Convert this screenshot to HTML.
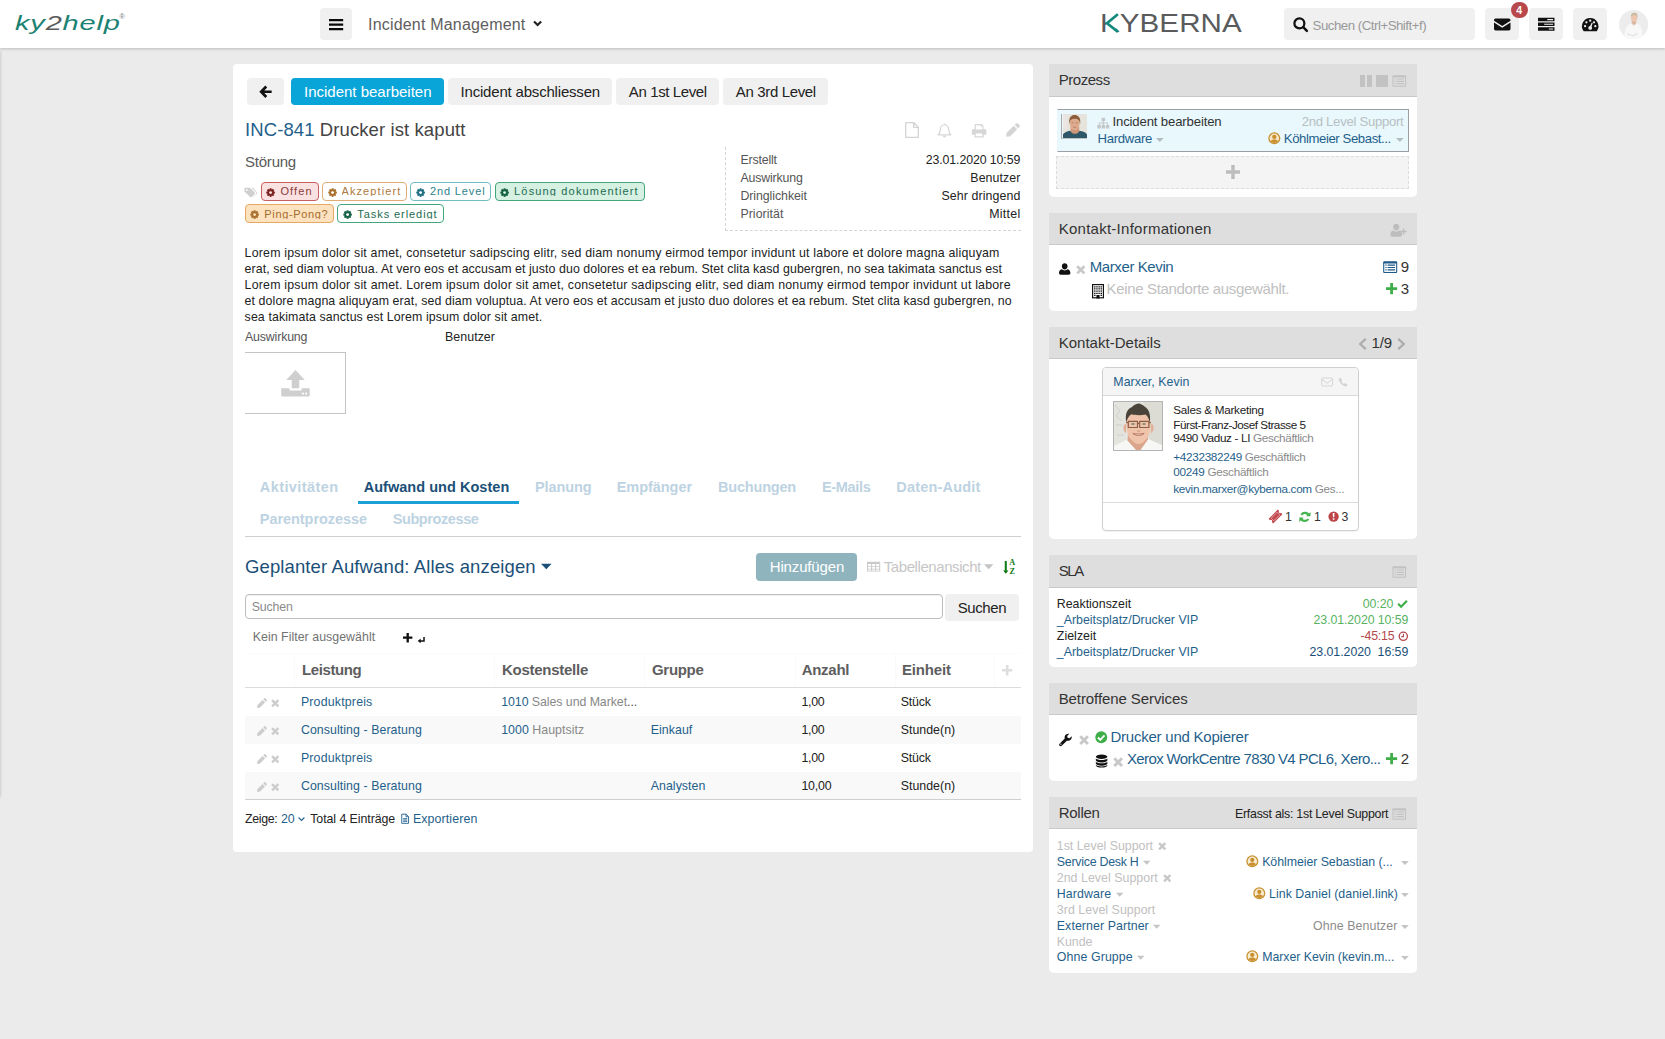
<!DOCTYPE html>
<html lang="de"><head><meta charset="utf-8"><title>ky2help – Incident Management</title>
<style>
html,body{margin:0;padding:0}
body{width:1665px;height:1039px;overflow:hidden;background:#ebebeb;position:relative;font-family:"Liberation Sans",sans-serif;font-size:12px;color:#333}
.b{position:absolute;box-sizing:border-box}
.t{position:absolute;white-space:nowrap;line-height:1}
svg.b{overflow:visible}

</style></head>
<body>
<div class="b " style="left:-12px;top:51px;width:12px;height:746px;background:#e2e2e2;box-shadow:0 0 3px rgba(0,0,0,.22);"></div>
<div class="b " style="left:0px;top:0px;width:1665px;height:48px;background:#fff;box-shadow:0 1px 3px rgba(0,0,0,.2);"></div>
<div class="t" style="left:15px;top:12.300px;font-size:21px;font-style:italic;color:#1c8273;letter-spacing:.6px;transform-origin:0 0;transform:scaleX(1.380);">ky<span style="color:#5a5a5a">2</span>help</div>
<div class="t" style="left:119.500px;top:13px;font-size:7px;color:#777;">®</div>
<div class="b " style="left:320px;top:8px;width:32px;height:32px;background:#f0f0f0;border-radius:4px;"></div>
<svg class="b" style="left:328.8px;top:18.6px;" width="14.2" height="11.2" viewBox="0 0 14.2 11.2"><path fill="#0a0a0a" d="M0 0h14.200v2.300H0zM0 4.450h14.200v2.300H0zM0 8.900h14.200v2.300H0z"/></svg>
<span class="t" style="left:368px;top:17px;font-size:16.0px;color:#5e5e5e;letter-spacing:0.191px;">Incident Management</span>
<svg class="b" style="left:533px;top:18.8px;" width="9.2" height="9.2" viewBox="0 0 16 16"><path fill="none" stroke="#222" stroke-width="3.800" d="M1.800 4.200L8 10.400l6.200-6.200"/></svg>
<span class="t" style="left:1099.9px;top:10.8px;font-size:25.3px;color:#5a5b5d;letter-spacing:0.042px;transform-origin:0 0;transform:scaleX(1.170);">KYBERNA</span>
<div class="b " style="left:1105.6px;top:12px;width:10.6px;height:22px;background:#fff;"></div>
<svg class="b" style="left:1100px;top:10px;" width="24" height="26" viewBox="0 0 24 26"><path fill="none" stroke="#14897b" stroke-width="2.700" stroke-linejoin="miter" d="M17.800 4.200L7 13.300l11 8.600"/></svg>
<div class="b " style="left:1284px;top:8px;width:191px;height:32px;background:#f0f0f0;border-radius:4px;"></div>
<svg class="b" style="left:1293px;top:16.5px;" width="15" height="15" viewBox="0 0 16 16"><circle cx="6.800" cy="6.800" r="5.300" fill="none" stroke="#111" stroke-width="2.400"/><path stroke="#111" stroke-width="2.700" stroke-linecap="round" d="M10.900 10.900l3.900 3.900"/></svg>
<span class="t" style="left:1312.6px;top:18.5px;font-size:13.26px;color:#999;letter-spacing:-0.487px;">Suchen (Ctrl+Shift+f)</span>
<div class="b " style="left:1485px;top:8px;width:34px;height:32px;background:#f0f0f0;border-radius:4px;"></div>
<div class="b " style="left:1529px;top:8px;width:34px;height:32px;background:#f0f0f0;border-radius:4px;"></div>
<div class="b " style="left:1573px;top:8px;width:34px;height:32px;background:#f0f0f0;border-radius:4px;"></div>
<svg class="b" style="left:1494px;top:16px;" width="16.5" height="16.5" viewBox="0 0 16 16"><path fill="#111" d="M0 4.1C0 3.2.7 2.5 1.6 2.5h12.8c.9 0 1.6.7 1.6 1.6v.4L8 9.6 0 4.5zM0 6.3l8 5.1 8-5.1v6.1c0 .9-.7 1.6-1.6 1.6H1.600c-.9 0-1.600-.7-1.600-1.600z"/></svg>
<svg class="b" style="left:1538px;top:15.5px;" width="16.5" height="16.5" viewBox="0 0 16 16"><path fill="#111" d="M0 1.700h16v3.400H0zM0 6.300h16v3.400H0zM0 10.900h16v3.400H0z"/><path fill="#f0f0f0" d="M9 2.800h5.600v1.200H9zM6 7.400h8.600v1.200H6zM10.500 12h4.100v1.200h-4.100z"/></svg>
<svg class="b" style="left:1582px;top:16.4px;" width="16.4" height="16.4" viewBox="0 0 16 16"><path fill="#111" d="M8 2a8 8 0 0 0-6.700 12.400c.2.400.6.600 1 .600h11.400c.400 0 .800-.200 1-.600A8 8 0 0 0 8 2z"/><g fill="#f0f0f0"><circle cx="8" cy="4.600" r="1.100"/><circle cx="4.300" cy="6.200" r="1.100"/><circle cx="11.700" cy="6.200" r="1.100"/><circle cx="3" cy="10" r="1.100"/><circle cx="13" cy="10" r="1.100"/><circle cx="8" cy="11.600" r="1.800"/><path d="M7.300 11l2.300-4.600.9.400-1.700 4.800z"/></g></svg>
<div class="b " style="left:1511px;top:1.5px;width:16.5px;height:16.5px;background:#b9484d;border-radius:50%;"></div>
<span class="t" style="left:1516.2px;top:4.6px;font-size:10.5px;color:#fff;font-weight:700;letter-spacing:0.205px;">4</span>
<svg class="b" style="left:1618.800px;top:9.600px" width="29.200" height="29.200" viewBox="0 0 30 30"><defs><clipPath id="avc"><circle cx="15" cy="15" r="15"/></clipPath></defs><g clip-path="url(#avc)"><rect width="30" height="30" fill="#ececec"/><path d="M5.500 30c-.5-8 2-14 6.500-16.500h7c4 2 5.500 8 5 16.500z" fill="#f8f8f8"/><path d="M12.800 13l2.700 2.800 2.300-2.800-.6-2h-3.800z" fill="#dcb29c"/><ellipse cx="15.600" cy="8.300" rx="3.200" ry="4" fill="#ecc6b0"/><path d="M12.300 8.200c-.6-4 1.400-5.300 3.500-5.300s3.900 1.300 3.100 5.300c-.4-2.200-1.200-3-3.200-3s-3 .8-3.400 3z" fill="#c9b9a3"/><path d="M8.500 24.500l6 2 4.500-2.500" stroke="#e3e3e3" stroke-width="1.300" fill="none"/><path d="M13 13.800l2.500 2.300 2.200-2.300" stroke="#d8d2cc" stroke-width=".8" fill="none"/></g></svg>
<div class="b " style="left:233px;top:64px;width:800px;height:788px;background:#fff;border-radius:4px;"></div>
<div class="b " style="left:246.5px;top:78px;width:37.5px;height:27px;background:#f0f0f0;border-radius:4px;"></div>
<svg class="b" style="left:258.5px;top:85px;" width="13.5" height="13.5" viewBox="0 0 16 16"><path fill="none" stroke="#111" stroke-width="3.200" stroke-linecap="butt" stroke-linejoin="miter" d="M8.600 1.800L2.600 8l6 6.200M3 8H15"/></svg>
<div class="b " style="left:291px;top:78px;width:153px;height:27px;background:#09a5d9;border-radius:4px;"></div>
<span class="t" style="left:304px;top:83.6px;font-size:15.0px;color:#fff;letter-spacing:-0.006px;">Incident bearbeiten</span>
<div class="b " style="left:448px;top:78px;width:164px;height:27px;background:#f0f0f0;border-radius:4px;"></div>
<span class="t" style="left:460.5px;top:83.6px;font-size:15.0px;color:#222;letter-spacing:-0.188px;">Incident abschliessen</span>
<div class="b " style="left:616px;top:78px;width:103px;height:27px;background:#f0f0f0;border-radius:4px;"></div>
<span class="t" style="left:628.8px;top:83.6px;font-size:15.0px;color:#222;letter-spacing:-0.38px;">An 1st Level</span>
<div class="b " style="left:723px;top:78px;width:105px;height:27px;background:#f0f0f0;border-radius:4px;"></div>
<span class="t" style="left:735.8px;top:83.6px;font-size:15.0px;color:#222;letter-spacing:-0.353px;">An 3rd Level</span>
<span class="t" style="left:245px;top:121.2px;font-size:18.5px;color:#444;letter-spacing:0.097px;"><span style="color:#1f5f8b">INC-841</span> Drucker ist kaputt</span>
<svg class="b" style="left:904.6px;top:122px;" width="14" height="16" viewBox="0 0 14 16"><path fill="none" stroke="#d4d4d4" stroke-width="1.300" stroke-linejoin="round" d="M.7.700h8.200l4.400 4.400v10.200H.7zM8.700.700v4.600h4.600"/></svg>
<svg class="b" style="left:937px;top:122.5px;" width="15" height="15.5" viewBox="0 0 16 16"><path fill="none" stroke="#d6d6d6" stroke-width="1.300" stroke-linejoin="round" d="M8 1.600c-2.800 0-4.400 2.200-4.400 5 0 3.400-1.400 4.800-2.400 5.800h13.600c-1-1-2.400-2.400-2.400-5.800 0-2.800-1.600-5-4.400-5z"/><path fill="#d6d6d6" d="M6.300 13.300h3.400c0 1-.7 1.800-1.700 1.800s-1.700-.8-1.700-1.800zM7.300.3h1.400v1.500H7.300z"/></svg>
<svg class="b" style="left:971px;top:122.5px;" width="16" height="15.5" viewBox="0 0 16 16"><path fill="#d6d6d6" d="M3.600 1h7.200l1.800 1.800v3.400h1.200c1 0 1.800.8 1.800 1.800v4.200h-2.800v2.800H3.400v-2.800H.6V8c0-1 .8-1.800 1.800-1.800h1.200zM4.800 2.200v4.400h6.600V3.600H9.800V2.200zM4.600 10.800v3h6.800v-3z"/></svg>
<svg class="b" style="left:1006px;top:123.3px;" width="14" height="14" viewBox="0 0 16 16"><path fill="#d4d4d4" d="M11.400.6c.6-.6 1.600-.6 2.200 0l1.800 1.800c.6.600.6 1.600 0 2.200l-1.500 1.500-4-4zM8.800 3.200l4 4-8.300 8.300L.2 15.800l.3-4.300z"/></svg>
<span class="t" style="left:245px;top:154.2px;font-size:15.0px;color:#5a5a5a;letter-spacing:-0.221px;">Störung</span>
<svg class="b" style="left:244.3px;top:186.2px;" width="13.2" height="13.2" viewBox="0 0 16 16"><path fill="#cfcfcf" d="M.5 3.300c0-.7.600-1.300 1.300-1.300h4.600c.5 0 1 .2 1.400.6l5.200 5.200c.5.500.5 1.300 0 1.800l-3.800 3.800c-.5.500-1.300.5-1.800 0L2.100 8.200C1.700 7.800.5 7.300.5 6.800z"/><circle cx="3.400" cy="4.800" r="1.100" fill="#fff"/><path fill="#cfcfcf" d="M9 2h1.100c.5 0 1 .2 1.400.6l4.200 5.200c.4.500.4 1.300 0 1.800l-3.800 3.800c-.3.300-.7.400-1.100.3l3.700-3.700c.7-.7.700-1.800 0-2.500z"/></svg>
<div class="b " style="left:260.5px;top:181.5px;width:58.3px;height:19px;background:#fbe2e2;border:1px solid #c9605f;border-radius:4px;"></div>
<svg class="b" style="left:266.0px;top:187.5px;" width="9.2" height="9.2" viewBox="0 0 16 16"><g fill="#7d2020"><circle cx="8" cy="8" r="5.700"/><path d="M6.300.5h3.400v15H6.300z"/><path d="M6.300.5h3.400v15H6.300z" transform="rotate(45 8 8)"/><path d="M6.300.5h3.400v15H6.300z" transform="rotate(90 8 8)"/><path d="M6.300.5h3.400v15H6.300z" transform="rotate(135 8 8)"/></g><circle cx="8" cy="8" r="2.500" fill="#fbe2e2"/></svg>
<span class="t" style="left:280.4px;top:185.8px;font-size:11.0px;color:#8c3b3b;letter-spacing:1.116px;overflow:hidden;height:10.600px;">Offen</span>
<div class="b " style="left:322px;top:181.5px;width:85px;height:19px;background:#fff;border:1px solid #dfae74;border-radius:4px;"></div>
<svg class="b" style="left:327.5px;top:187.5px;" width="9.2" height="9.2" viewBox="0 0 16 16"><g fill="#a8702c"><circle cx="8" cy="8" r="5.700"/><path d="M6.300.5h3.400v15H6.300z"/><path d="M6.300.5h3.400v15H6.300z" transform="rotate(45 8 8)"/><path d="M6.300.5h3.400v15H6.300z" transform="rotate(90 8 8)"/><path d="M6.300.5h3.400v15H6.300z" transform="rotate(135 8 8)"/></g><circle cx="8" cy="8" r="2.500" fill="#fff"/></svg>
<span class="t" style="left:341.5px;top:185.8px;font-size:11.0px;color:#ad7a3f;letter-spacing:1.088px;overflow:hidden;height:10.600px;">Akzeptiert</span>
<div class="b " style="left:410.3px;top:181.5px;width:81px;height:19px;background:#fff;border:1px solid #6fbcc4;border-radius:4px;"></div>
<svg class="b" style="left:415.8px;top:187.5px;" width="9.2" height="9.2" viewBox="0 0 16 16"><g fill="#1f6f80"><circle cx="8" cy="8" r="5.700"/><path d="M6.300.5h3.400v15H6.300z"/><path d="M6.300.5h3.400v15H6.300z" transform="rotate(45 8 8)"/><path d="M6.300.5h3.400v15H6.300z" transform="rotate(90 8 8)"/><path d="M6.300.5h3.400v15H6.300z" transform="rotate(135 8 8)"/></g><circle cx="8" cy="8" r="2.500" fill="#fff"/></svg>
<span class="t" style="left:429.9px;top:185.8px;font-size:11.0px;color:#2f7f8c;letter-spacing:0.887px;overflow:hidden;height:10.600px;">2nd Level</span>
<div class="b " style="left:494.5px;top:181.5px;width:150px;height:19px;background:#d6f0e2;border:1px solid #43a57c;border-radius:4px;"></div>
<svg class="b" style="left:500.0px;top:187.5px;" width="9.2" height="9.2" viewBox="0 0 16 16"><g fill="#156045"><circle cx="8" cy="8" r="5.700"/><path d="M6.300.5h3.400v15H6.300z"/><path d="M6.300.5h3.400v15H6.300z" transform="rotate(45 8 8)"/><path d="M6.300.5h3.400v15H6.300z" transform="rotate(90 8 8)"/><path d="M6.300.5h3.400v15H6.300z" transform="rotate(135 8 8)"/></g><circle cx="8" cy="8" r="2.500" fill="#d6f0e2"/></svg>
<span class="t" style="left:514.1px;top:185.8px;font-size:11.0px;color:#1d6b50;letter-spacing:1.156px;overflow:hidden;height:10.600px;">Lösung dokumentiert</span>
<div class="b " style="left:244.6px;top:204.3px;width:89.2px;height:19px;background:#fde2c0;border:1px solid #e6a964;border-radius:4px;"></div>
<svg class="b" style="left:250.1px;top:210.3px;" width="9.2" height="9.2" viewBox="0 0 16 16"><g fill="#a8702c"><circle cx="8" cy="8" r="5.700"/><path d="M6.300.5h3.400v15H6.300z"/><path d="M6.300.5h3.400v15H6.300z" transform="rotate(45 8 8)"/><path d="M6.300.5h3.400v15H6.300z" transform="rotate(90 8 8)"/><path d="M6.300.5h3.400v15H6.300z" transform="rotate(135 8 8)"/></g><circle cx="8" cy="8" r="2.500" fill="#fde2c0"/></svg>
<span class="t" style="left:264.3px;top:208.6px;font-size:11.0px;color:#a36c2c;letter-spacing:0.66px;overflow:hidden;height:10.600px;">Ping-Pong?</span>
<div class="b " style="left:337px;top:204.3px;width:106.5px;height:19px;background:#fff;border:1px solid #43a57c;border-radius:4px;"></div>
<svg class="b" style="left:342.5px;top:210.3px;" width="9.2" height="9.2" viewBox="0 0 16 16"><g fill="#156045"><circle cx="8" cy="8" r="5.700"/><path d="M6.300.5h3.400v15H6.300z"/><path d="M6.300.5h3.400v15H6.300z" transform="rotate(45 8 8)"/><path d="M6.300.5h3.400v15H6.300z" transform="rotate(90 8 8)"/><path d="M6.300.5h3.400v15H6.300z" transform="rotate(135 8 8)"/></g><circle cx="8" cy="8" r="2.500" fill="#fff"/></svg>
<span class="t" style="left:357.3px;top:208.6px;font-size:11.0px;color:#1d6b50;letter-spacing:0.931px;overflow:hidden;height:10.600px;">Tasks erledigt</span>
<div class="b " style="left:725px;top:147px;width:296px;height:83.5px;border-left:1px dashed #d4d4d4;border-bottom:1px dashed #d4d4d4;"></div>
<span class="t" style="left:740.4px;top:154px;font-size:12.36px;color:#555;letter-spacing:-0.16px;">Erstellt</span>
<span class="t" style="left:925.69px;top:154px;font-size:12.36px;color:#222;letter-spacing:-0.108px;">23.01.2020 10:59</span>
<span class="t" style="left:740.4px;top:172px;font-size:12.36px;color:#555;letter-spacing:-0.159px;">Auswirkung</span>
<span class="t" style="left:970.37px;top:172px;font-size:12.36px;color:#222;letter-spacing:0.066px;">Benutzer</span>
<span class="t" style="left:740.4px;top:190px;font-size:12.36px;color:#555;letter-spacing:-0.064px;">Dringlichkeit</span>
<span class="t" style="left:941.41px;top:190px;font-size:12.36px;color:#222;letter-spacing:0.103px;">Sehr dringend</span>
<span class="t" style="left:740.4px;top:208px;font-size:12.36px;color:#555;letter-spacing:0.045px;">Priorität</span>
<span class="t" style="left:989.13px;top:208px;font-size:12.36px;color:#222;letter-spacing:0.328px;">Mittel</span>
<span class="t" style="left:244.6px;top:246.6px;font-size:12.36px;color:#222;letter-spacing:0.201px;">Lorem ipsum dolor sit amet, consetetur sadipscing elitr, sed diam nonumy eirmod tempor invidunt ut labore et dolore magna aliquyam</span>
<span class="t" style="left:244.6px;top:262.6px;font-size:12.36px;color:#222;letter-spacing:0.068px;">erat, sed diam voluptua. At vero eos et accusam et justo duo dolores et ea rebum. Stet clita kasd gubergren, no sea takimata sanctus est</span>
<span class="t" style="left:244.6px;top:278.6px;font-size:12.36px;color:#222;letter-spacing:0.203px;">Lorem ipsum dolor sit amet. Lorem ipsum dolor sit amet, consetetur sadipscing elitr, sed diam nonumy eirmod tempor invidunt ut labore</span>
<span class="t" style="left:244.6px;top:294.6px;font-size:12.36px;color:#222;letter-spacing:0.094px;">et dolore magna aliquyam erat, sed diam voluptua. At vero eos et accusam et justo duo dolores et ea rebum. Stet clita kasd gubergren, no</span>
<span class="t" style="left:244.6px;top:310.6px;font-size:12.36px;color:#222;letter-spacing:0.111px;">sea takimata sanctus est Lorem ipsum dolor sit amet.</span>
<span class="t" style="left:245px;top:331.3px;font-size:12.36px;color:#555;letter-spacing:-0.159px;">Auswirkung</span>
<span class="t" style="left:445px;top:331.3px;font-size:12.36px;color:#222;letter-spacing:0.066px;">Benutzer</span>
<div class="b " style="left:245px;top:352px;width:101px;height:62px;border:1px solid #c4c4c4;border-left:0;"></div>
<svg class="b" style="left:281px;top:368.5px;" width="29" height="28.5" viewBox="0 0 16 16"><path fill="#cfcfcf" d="M8 .5l5.200 5.700h-3.100v4.600H5.900V6.200H2.800zM0 10.800h4.600v1.300h6.800v-1.300H16v4c0 .4-.3.700-.7.700H.7c-.4 0-.7-.3-.7-.7z"/><circle cx="12.200" cy="13.800" r=".6" fill="#fff"/><circle cx="14" cy="13.800" r=".6" fill="#fff"/></svg>
<span class="t" style="left:259.8px;top:480.3px;font-size:14.5px;color:#bdd3e2;font-weight:700;letter-spacing:0.414px;">Aktivitäten</span>
<span class="t" style="left:363.7px;top:480.3px;font-size:14.5px;color:#1b4f78;font-weight:700;letter-spacing:0.033px;">Aufwand und Kosten</span>
<span class="t" style="left:535px;top:480.3px;font-size:14.5px;color:#bdd3e2;font-weight:700;letter-spacing:-0.1px;">Planung</span>
<span class="t" style="left:616.7px;top:480.3px;font-size:14.5px;color:#bdd3e2;font-weight:700;letter-spacing:-0.039px;">Empfänger</span>
<span class="t" style="left:718px;top:480.3px;font-size:14.5px;color:#bdd3e2;font-weight:700;letter-spacing:-0.194px;">Buchungen</span>
<span class="t" style="left:821.9px;top:480.3px;font-size:14.5px;color:#bdd3e2;font-weight:700;letter-spacing:-0.295px;">E-Mails</span>
<span class="t" style="left:896.3px;top:480.3px;font-size:14.5px;color:#bdd3e2;font-weight:700;letter-spacing:0.184px;">Daten-Audit</span>
<span class="t" style="left:259.8px;top:512.3px;font-size:14.5px;color:#bdd3e2;font-weight:700;letter-spacing:-0.057px;">Parentprozesse</span>
<span class="t" style="left:392.7px;top:512.3px;font-size:14.5px;color:#bdd3e2;font-weight:700;letter-spacing:-0.405px;">Subprozesse</span>
<div class="b " style="left:358.2px;top:501px;width:160.7px;height:3px;background:#1ba1d8;"></div>
<div class="b " style="left:245px;top:536px;width:775.5px;height:1px;background:#cfcfcf;"></div>
<span class="t" style="left:245px;top:557.8px;font-size:18.5px;color:#1b4f78;letter-spacing:0.114px;">Geplanter Aufwand: Alles anzeigen</span>
<svg class="b" style="left:540.8px;top:560.7px;" width="10.6" height="10.6" viewBox="0 0 16 16"><path fill="#1b4f78" d="M0 4h16L8 12.500z"/></svg>
<div class="b " style="left:756px;top:553px;width:101.2px;height:27.6px;background:#8fb4be;border-radius:4px;"></div>
<span class="t" style="left:769.7px;top:559px;font-size:15.0px;color:#fff;letter-spacing:-0.139px;">Hinzufügen</span>
<svg class="b" style="left:867px;top:559.8px;" width="13.2" height="13.2" viewBox="0 0 16 16"><path fill="#cacaca" d="M0 2h16v12H0zM1.200 5v2.200h3.800V5zm5 0v2.200h3.600V5zm4.800 0v2.200h3.800V5zM1.200 8.300v2.200h3.800V8.300zm5 0v2.200h3.600V8.300zm4.800 0v2.200h3.800V8.300zM1.200 11.600v1.400h3.800v-1.400zm5 0v1.400h3.600v-1.400zm4.800 0v1.400h3.800v-1.400z" fill-rule="evenodd"/></svg>
<span class="t" style="left:883.8px;top:558.7px;font-size:15.0px;color:#c6c6c6;letter-spacing:-0.427px;">Tabellenansicht</span>
<svg class="b" style="left:984px;top:562.3px;" width="9.4" height="9.4" viewBox="0 0 16 16"><path fill="#c4c4c4" d="M0 4h16L8 12.500z"/></svg>
<svg class="b" style="left:1002.3px;top:559.8px;" width="7" height="14.8" viewBox="0 0 7.600 16"><path fill="#0d7a12" d="M3 1h2.200v10.500H7L4.100 15 1.200 11.500H3z"/></svg>
<span class="t" style="left:1009.2px;top:559.4px;font-size:8.2px;color:#0d7a12;font-weight:700;font-family:&quot;Liberation Serif&quot;, serif;">A</span>
<span class="t" style="left:1009.5px;top:567.8px;font-size:8.2px;color:#0d7a12;font-weight:700;font-family:&quot;Liberation Serif&quot;, serif;">Z</span>
<div class="b " style="left:244.6px;top:593.5px;width:698px;height:25.5px;background:#fff;border:1px solid #bdbdbd;border-radius:4px;box-shadow:inset 0 1px 1px rgba(0,0,0,.06);"></div>
<span class="t" style="left:251.7px;top:600.5px;font-size:12.36px;color:#8a8a8a;letter-spacing:-0.154px;">Suchen</span>
<div class="b " style="left:945px;top:593.5px;width:74px;height:27px;background:#f0f0f0;border-radius:4px;"></div>
<span class="t" style="left:957.7px;top:599.5px;font-size:15.0px;color:#222;letter-spacing:-0.396px;">Suchen</span>
<span class="t" style="left:252.7px;top:631.4px;font-size:12.36px;color:#727272;letter-spacing:0.04px;">Kein Filter ausgewählt</span>
<svg class="b" style="left:403px;top:632.6px;" width="9.4" height="9.4" viewBox="0 0 16 16"><path fill="#111" d="M6 0h4v6h6v4h-6v6H6v-6H0V6h6z"/></svg>
<svg class="b" style="left:416.5px;top:636.3px;" width="8.5" height="8.5" viewBox="0 0 16 16"><path fill="#111" d="M11.800 2h2.800v8.600H6.800v2.900L1.400 9.200l5.400-4.300v2.900h5z"/></svg>
<div class="b " style="left:245px;top:653px;width:775.5px;height:34px;background:#fff;border-top:1px solid #fafbfb;"></div>
<div class="b " style="left:294.3px;top:653px;width:1px;height:34px;background:#fafafa;"></div>
<div class="b " style="left:494.4px;top:653px;width:1px;height:34px;background:#fafafa;"></div>
<div class="b " style="left:644.3px;top:653px;width:1px;height:34px;background:#fafafa;"></div>
<div class="b " style="left:794.5px;top:653px;width:1px;height:34px;background:#fafafa;"></div>
<div class="b " style="left:894.7px;top:653px;width:1px;height:34px;background:#fafafa;"></div>
<div class="b " style="left:994.4px;top:653px;width:1px;height:34px;background:#fafafa;"></div>
<div class="b " style="left:245px;top:686.5px;width:775.5px;height:1.5px;background:#dcdcdc;"></div>
<span class="t" style="left:301.9px;top:661.9px;font-size:15.0px;color:#5e5e5e;font-weight:700;letter-spacing:-0.375px;">Leistung</span>
<span class="t" style="left:502px;top:661.9px;font-size:15.0px;color:#5e5e5e;font-weight:700;letter-spacing:-0.267px;">Kostenstelle</span>
<span class="t" style="left:652px;top:661.9px;font-size:15.0px;color:#5e5e5e;font-weight:700;letter-spacing:-0.307px;">Gruppe</span>
<span class="t" style="left:801.7px;top:661.9px;font-size:15.0px;color:#5e5e5e;font-weight:700;letter-spacing:-0.279px;">Anzahl</span>
<span class="t" style="left:901.9px;top:661.9px;font-size:15.0px;color:#5e5e5e;font-weight:700;letter-spacing:-0.145px;">Einheit</span>
<svg class="b" style="left:1002px;top:664.7px;" width="10.4" height="10.4" viewBox="0 0 16 16"><path fill="#dedede" d="M6 0h4v6h6v4h-6v6H6v-6H0V6h6z"/></svg>
<svg class="b" style="left:257px;top:698.1px;" width="10" height="10" viewBox="0 0 16 16"><path fill="#cdcdcd" d="M11.400.6c.6-.6 1.600-.6 2.200 0l1.800 1.800c.6.600.6 1.600 0 2.200l-1.500 1.500-4-4zM8.800 3.200l4 4-8.300 8.300L.2 15.800l.3-4.300z"/></svg>
<svg class="b" style="left:270.8px;top:699.4000000000001px;" width="8.4" height="8.4" viewBox="0 0 16 16"><path fill="none" stroke="#cdcdcd" stroke-width="4.600" d="M2 2l12 12M14 2L2 14"/></svg>
<span class="t" style="left:300.9px;top:695.8px;font-size:12.36px;color:#1f5f8b;letter-spacing:0.184px;">Produktpreis</span>
<span class="t" style="left:501.2px;top:695.8px;font-size:12.36px;color:#333;letter-spacing:-0.06px;"><span style="color:#1f5f8b">1010</span><span style="color:#888"> Sales und Market</span><span style="color:#555">...</span></span>
<span class="t" style="left:801.4px;top:695.8px;font-size:12.36px;color:#222;letter-spacing:-0.266px;">1,00</span>
<span class="t" style="left:900.7px;top:695.8px;font-size:12.36px;color:#222;letter-spacing:-0.184px;">Stück</span>
<div class="b " style="left:245px;top:715.7px;width:775.5px;height:28px;background:#f9f9f9;"></div>
<svg class="b" style="left:257px;top:726.1px;" width="10" height="10" viewBox="0 0 16 16"><path fill="#cdcdcd" d="M11.400.6c.6-.6 1.600-.6 2.200 0l1.800 1.800c.6.600.6 1.600 0 2.200l-1.500 1.500-4-4zM8.800 3.200l4 4-8.300 8.300L.2 15.800l.3-4.300z"/></svg>
<svg class="b" style="left:270.8px;top:727.4000000000001px;" width="8.4" height="8.4" viewBox="0 0 16 16"><path fill="none" stroke="#cdcdcd" stroke-width="4.600" d="M2 2l12 12M14 2L2 14"/></svg>
<span class="t" style="left:300.9px;top:723.8px;font-size:12.36px;color:#1f5f8b;letter-spacing:0.069px;">Consulting - Beratung</span>
<span class="t" style="left:501.2px;top:723.8px;font-size:12.36px;color:#333;letter-spacing:0.038px;"><span style="color:#1f5f8b">1000</span><span style="color:#888"> Hauptsitz</span></span>
<span class="t" style="left:650.8px;top:723.8px;font-size:12.36px;color:#1f5f8b;letter-spacing:0.038px;">Einkauf</span>
<span class="t" style="left:801.4px;top:723.8px;font-size:12.36px;color:#222;letter-spacing:-0.266px;">1,00</span>
<span class="t" style="left:900.7px;top:723.8px;font-size:12.36px;color:#222;letter-spacing:0.024px;">Stunde(n)</span>
<svg class="b" style="left:257px;top:754.1px;" width="10" height="10" viewBox="0 0 16 16"><path fill="#cdcdcd" d="M11.400.6c.6-.6 1.600-.6 2.200 0l1.800 1.800c.6.600.6 1.600 0 2.200l-1.500 1.500-4-4zM8.800 3.200l4 4-8.300 8.300L.2 15.800l.3-4.300z"/></svg>
<svg class="b" style="left:270.8px;top:755.4000000000001px;" width="8.4" height="8.4" viewBox="0 0 16 16"><path fill="none" stroke="#cdcdcd" stroke-width="4.600" d="M2 2l12 12M14 2L2 14"/></svg>
<span class="t" style="left:300.9px;top:751.8px;font-size:12.36px;color:#1f5f8b;letter-spacing:0.184px;">Produktpreis</span>
<span class="t" style="left:801.4px;top:751.8px;font-size:12.36px;color:#222;letter-spacing:-0.266px;">1,00</span>
<span class="t" style="left:900.7px;top:751.8px;font-size:12.36px;color:#222;letter-spacing:-0.184px;">Stück</span>
<div class="b " style="left:245px;top:771.7px;width:775.5px;height:28px;background:#f9f9f9;"></div>
<svg class="b" style="left:257px;top:782.1px;" width="10" height="10" viewBox="0 0 16 16"><path fill="#cdcdcd" d="M11.400.6c.6-.6 1.600-.6 2.200 0l1.800 1.800c.6.600.6 1.600 0 2.200l-1.500 1.500-4-4zM8.800 3.200l4 4-8.300 8.300L.2 15.800l.3-4.300z"/></svg>
<svg class="b" style="left:270.8px;top:783.4000000000001px;" width="8.4" height="8.4" viewBox="0 0 16 16"><path fill="none" stroke="#cdcdcd" stroke-width="4.600" d="M2 2l12 12M14 2L2 14"/></svg>
<span class="t" style="left:300.9px;top:779.8px;font-size:12.36px;color:#1f5f8b;letter-spacing:0.069px;">Consulting - Beratung</span>
<span class="t" style="left:650.8px;top:779.8px;font-size:12.36px;color:#1f5f8b;letter-spacing:0.024px;">Analysten</span>
<span class="t" style="left:801.4px;top:779.8px;font-size:12.36px;color:#222;letter-spacing:-0.188px;">10,00</span>
<span class="t" style="left:900.7px;top:779.8px;font-size:12.36px;color:#222;letter-spacing:0.024px;">Stunde(n)</span>
<div class="b " style="left:245px;top:799.3px;width:775.5px;height:1px;background:#cfcfcf;"></div>
<span class="t" style="left:245px;top:813px;font-size:12.36px;color:#222;letter-spacing:-0.31px;">Zeige:</span>
<span class="t" style="left:281px;top:813px;font-size:12.36px;color:#1f5f8b;letter-spacing:-0.075px;">20</span>
<svg class="b" style="left:297.5px;top:816px;" width="7" height="6" viewBox="0 0 7 6"><path fill="none" stroke="#1f5f8b" stroke-width="1.100" d="M.6 1.500L3.500 4.400 6.400 1.500"/></svg>
<span class="t" style="left:310.2px;top:813px;font-size:12.36px;color:#222;letter-spacing:-0.056px;">Total 4 Einträge</span>
<svg class="b" style="left:399.5px;top:812.5px;" width="10.3" height="11.5" viewBox="0 0 16 16"><path fill="none" stroke="#1f5f8b" stroke-width="1.400" d="M2.700.9h6.800l3.800 3.800v10.400H2.700zM9.300.9v4h4"/><path fill="#1f5f8b" d="M4.800 7.400h6.400v1.200H4.800zm0 2.300h6.400v1.200H4.800zm0 2.300h6.400v1.200H4.800z"/></svg>
<span class="t" style="left:412.9px;top:813px;font-size:12.36px;color:#1f5f8b;letter-spacing:0.127px;">Exportieren</span>
<div class="b " style="left:1049px;top:96.5px;width:368px;height:100.5px;background:#fff;border-radius:0 0 5px 5px;"></div>
<div class="b " style="left:1049px;top:64px;width:368px;height:32.5px;background:#dedede;border-bottom:1px solid #c9c9c9;"></div>
<span class="t" style="left:1058.7px;top:72.3px;font-size:15.0px;color:#333;letter-spacing:-0.455px;">Prozess</span>
<div class="b " style="left:1360px;top:75.2px;width:5px;height:11.6px;background:#c2c2c2;"></div>
<div class="b " style="left:1367.3px;top:75.2px;width:5px;height:11.6px;background:#c2c2c2;"></div>
<div class="b " style="left:1376px;top:75.2px;width:12.2px;height:11.6px;background:#c2c2c2;"></div>
<svg class="b" style="left:1392px;top:74px;" width="14.5" height="14" viewBox="0 0 16 16"><rect x=".2" y="1.500" width="15.600" height="13" rx="1.200" fill="#c2c2c2"/><path fill="#dedede" d="M1.400 3.900h13.200v9.400H1.400z"/><path fill="#c2c2c2" d="M2.600 5.100h1.400v1.300H2.600zm2.500 0h8.300v1.300H5.100zM2.600 7.700h1.400V9H2.600zm2.500 0h8.300V9H5.100zM2.600 10.300h1.400v1.300H2.600zm2.500 0h8.300v1.300H5.100z"/></svg>
<div class="b " style="left:1056.8px;top:109.3px;width:352px;height:42.3px;background:#e8f8fd;border:1px solid #9aa0a3;border-left-color:#e8f8fd;"></div>
<svg class="b" style="left:1061px;top:114px" width="26" height="25" viewBox="0 0 26 25"><rect width="1" height="25" fill="#a9a9a9"/><rect y="24" width="26" height=".8" fill="#b5b5b5"/><rect x="2" width="24" height="24" fill="#e6e3dc"/><path d="M2 1h4v14H2z" fill="#ebe6e4"/><path d="M2 24v-3.800c2-2 5-3.200 7.500-3.400h9c3 .4 5.500 1.400 7.500 3.400V24z" fill="#2e5767"/><path d="M9.600 13v4.300c1.500 3.400 7 3.400 8.600 0V13z" fill="#cf967a"/><ellipse cx="13.700" cy="9.600" rx="5" ry="6.700" fill="#dfab8f"/><path d="M8.400 10C7.300 3.500 10.500 1 13.600 1s6.700 2.500 5.500 9c-.5-3.500-1.700-5.300-5.400-5.300S8.900 6.500 8.400 10z" fill="#8b5d3b"/><path d="M10.500 8.800h2.200M14.800 8.800H17" stroke="#a57a64" stroke-width=".8"/><path d="M12.200 13.200h3" stroke="#b9776a" stroke-width=".9"/></svg>
<svg class="b" style="left:1097px;top:116.5px;" width="12.7" height="12.7" viewBox="0 0 16 16"><path fill="#c4c8ca" d="M5.800 1h4.400v4H8.700v2h5.100v3h1.700v4.400h-4.400V10h1.500V8.200H8.700V10h1.500v4.400H5.800V10h1.500V8.200H3.400V10h1.500v4.400H.5V10h1.700V7h5.100V5H5.800z"/></svg>
<span class="t" style="left:1112.5px;top:115px;font-size:13.13px;color:#333;letter-spacing:-0.14px;">Incident bearbeiten</span>
<span class="t" style="left:1301.71px;top:115.3px;font-size:13.13px;color:#b9bfc2;letter-spacing:-0.285px;">2nd Level Support</span>
<span class="t" style="left:1097.6px;top:132px;font-size:13.13px;color:#1f5f8b;letter-spacing:-0.301px;">Hardware</span>
<svg class="b" style="left:1156px;top:136.3px;" width="7.7" height="7.7" viewBox="0 0 16 16"><path fill="#b5bcc0" d="M0 4h16L8 12.500z"/></svg>
<svg class="b" style="left:1267.7px;top:132.3px;" width="12.6" height="12.6" viewBox="0 0 16 16"><circle cx="8" cy="8" r="7.600" fill="#c8902e"/><circle cx="8" cy="8" r="6" fill="#f6e6c8"/><circle cx="8" cy="6.300" r="2.700" fill="#c8902e"/><path fill="#c8902e" d="M3.300 11.800C4 9.900 5.800 9.400 8 9.400s4 .5 4.700 2.400C11.600 13.200 9.900 14 8 14s-3.600-.8-4.700-2.200z"/></svg>
<span class="t" style="left:1283.8px;top:132px;font-size:13.13px;color:#1f5f8b;letter-spacing:-0.397px;">Köhlmeier Sebast...</span>
<svg class="b" style="left:1396px;top:136.3px;" width="7.7" height="7.7" viewBox="0 0 16 16"><path fill="#b5bcc0" d="M0 4h16L8 12.500z"/></svg>
<div class="b " style="left:1056.3px;top:155.7px;width:352.5px;height:33px;background:#f4f4f4;border:1px dashed #dcdcdc;"></div>
<svg class="b" style="left:1225.5px;top:165.3px;" width="14" height="14" viewBox="0 0 16 16"><path fill="#bdbdbd" d="M6 0h4v6h6v4h-6v6H6v-6H0V6h6z"/></svg>
<div class="b " style="left:1049px;top:245.3px;width:368px;height:65.5px;background:#fff;border-radius:0 0 5px 5px;"></div>
<div class="b " style="left:1049px;top:213.3px;width:368px;height:32.0px;background:#dedede;border-bottom:1px solid #c9c9c9;"></div>
<span class="t" style="left:1058.7px;top:221.4px;font-size:15.0px;color:#333;letter-spacing:0.257px;">Kontakt-Informationen</span>
<svg class="b" style="left:1389.8px;top:222.8px;" width="16.6" height="14.5" viewBox="0 1 16 13.500"><path fill="#bdbdbd" d="M6 1.500c1.700 0 3 1.400 3 3.200S7.700 8 6 8 3 6.500 3 4.700 4.300 1.500 6 1.500zM2.900 8c.9.700 1.900 1.100 3.100 1.100S8.200 8.700 9.100 8c1.700.4 2.500 2 2.500 4.200 0 1-.7 1.800-1.700 1.800H2.100c-1 0-1.700-.8-1.700-1.800C.4 10 1.200 8.400 2.900 8zM12.300 6h1.500v2.200H16v1.500h-2.200v2.200h-1.500V9.700h-2.200V8.200h2.200z"/></svg>
<svg class="b" style="left:1058.7px;top:263px;" width="11.4" height="12" viewBox="0 0 16 16"><path fill="#111" d="M8 0c2.300 0 4 1.800 4 4.200S10.300 8.600 8 8.600 4 6.600 4 4.200 5.700 0 8 0zM3.800 8.400c1.100 1 2.600 1.600 4.200 1.600s3.100-.6 4.200-1.600C14.600 8.900 16 11 16 13.700c0 1.300-1 2.300-2.400 2.300H2.400C1 16 0 15 0 13.700 0 11 1.400 8.900 3.800 8.400z"/></svg>
<svg class="b" style="left:1076px;top:265px;" width="9.6" height="9.6" viewBox="0 0 16 16"><path fill="none" stroke="#c8c8c8" stroke-width="4.600" d="M2 2l12 12M14 2L2 14"/></svg>
<span class="t" style="left:1089.7px;top:259px;font-size:15.0px;color:#1f5f8b;letter-spacing:-0.397px;">Marxer Kevin</span>
<svg class="b" style="left:1382.8px;top:259.7px;" width="14.4" height="14.4" viewBox="0 0 16 16"><rect x=".2" y="1.500" width="15.600" height="13" rx="1.200" fill="#1d5a88"/><path fill="#fff" d="M1.400 3.900h13.200v9.400H1.400z"/><path fill="#1d5a88" d="M2.600 5.100h1.400v1.300H2.600zm2.500 0h8.300v1.300H5.100zM2.600 7.700h1.400V9H2.600zm2.500 0h8.300V9H5.100zM2.600 10.300h1.400v1.300H2.600zm2.500 0h8.300v1.300H5.100z"/></svg>
<span class="t" style="left:1400.8px;top:259px;font-size:15.0px;color:#333;">9</span>
<svg class="b" style="left:1091.7px;top:283.6px;" width="12" height="14.4" viewBox="0 0 13.300 16"><path fill="#111" d="M0 0h13.300v16H0z"/><path fill="#fff" d="M1.300 1.300h10.700v13.400H1.300z"/><path fill="#111" d="M2.300 2.400h1.600v1.400H2.300zm2.400 0h1.600v1.400H4.700zm2.400 0h1.600v1.400H7.100zm2.400 0h1.600v1.400H9.500zM2.300 4.800h1.600v1.400H2.300zm2.400 0h1.600v1.400H4.700zm2.400 0h1.600v1.400H7.100zm2.400 0h1.600v1.400H9.500zM2.300 7.200h1.600v1.400H2.300zm2.400 0h1.600v1.400H4.700zm2.400 0h1.600v1.400H7.100zm2.400 0h1.600v1.400H9.500zM2.300 9.600h1.600V11H2.300zm2.400 0h1.600V11H4.700zm2.400 0h1.600V11H7.100zm2.400 0h1.600V11H9.500zM2.300 12h1.600v1.400H2.300zm7.200 0h1.600v1.400H9.500zM4.900 12.100h3.500V16H4.900z"/></svg>
<span class="t" style="left:1106.5px;top:281.2px;font-size:15.0px;color:#c0c0c0;letter-spacing:-0.341px;">Keine Standorte ausgewählt.</span>
<svg class="b" style="left:1386px;top:283.3px;" width="11.2" height="11.2" viewBox="0 0 16 16"><path fill="#3fae49" d="M6 0h4v6h6v4h-6v6H6v-6H0V6h6z"/></svg>
<span class="t" style="left:1400.8px;top:281.2px;font-size:15.0px;color:#333;">3</span>
<div class="b " style="left:1049px;top:359.3px;width:368px;height:179.7px;background:#fff;border-radius:0 0 5px 5px;"></div>
<div class="b " style="left:1049px;top:327.3px;width:368px;height:32.0px;background:#dedede;border-bottom:1px solid #c9c9c9;"></div>
<span class="t" style="left:1058.7px;top:335.2px;font-size:15.0px;color:#333;letter-spacing:0.019px;">Kontakt-Details</span>
<svg class="b" style="left:1357.5px;top:337.5px;" width="9" height="12" viewBox="0 0 9 12"><path fill="none" stroke="#adadad" stroke-width="2.300" d="M7.800 .8L2.200 6l5.600 5.200"/></svg>
<span class="t" style="left:1371.5px;top:335.2px;font-size:15.0px;color:#333;letter-spacing:-0.12px;">1/9</span>
<svg class="b" style="left:1397px;top:337.5px;" width="9" height="12" viewBox="0 0 9 12"><path fill="none" stroke="#adadad" stroke-width="2.300" d="M1.200 .8L6.800 6l-5.600 5.200"/></svg>
<div class="b " style="left:1102px;top:367px;width:257px;height:163.5px;background:#fff;border:1px solid #cfcfcf;border-radius:4px;box-shadow:0 1px 1px rgba(0,0,0,.05);"></div>
<div class="b " style="left:1103px;top:368px;width:255px;height:27.5px;background:#f5f5f5;border-bottom:1px solid #d8d8d8;border-radius:3px 3px 0 0;"></div>
<span class="t" style="left:1113.3px;top:376.2px;font-size:12.36px;color:#1f5f8b;letter-spacing:0.041px;">Marxer, Kevin</span>
<svg class="b" style="left:1320.6px;top:376px;" width="12.4" height="12" viewBox="0 0 16 16"><rect x=".7" y="2.700" width="14.600" height="10.600" rx="1.300" fill="none" stroke="#d4d4d4" stroke-width="1.300"/><path fill="none" stroke="#d4d4d4" stroke-width="1.300" d="M1 4.500l7 5 7-5"/></svg>
<svg class="b" style="left:1338.4px;top:376.6px;" width="10" height="10.4" viewBox="0 0 16 16"><path fill="#d4d4d4" d="M3.600 1.100c.3-.2.700-.1.900.2l2 3c.2.300.1.700-.1.900L5.100 6.400c.9 1.900 2.500 3.500 4.400 4.500l1.200-1.300c.2-.3.600-.3.900-.1l3 2c.3.200.4.600.2.900l-1 1.700c-.4.700-1.200 1-2 .8C6.600 13.600 2.400 9.400 1.100 4.200c-.2-.8.100-1.600.8-2z"/></svg>
<svg class="b" style="left:1113px;top:400.800px" width="50" height="50" viewBox="0 0 50 50"><rect width="50" height="50" fill="#b4b4b4"/><rect x="1" y="1" width="48" height="48" fill="#e3e4de"/><path d="M30 1h19v48H38z" fill="#dcdcd5"/><path d="M2 4l5 6-4 5 6 5M3 24h6M4 34h7" stroke="#cfd0cb" stroke-width="1" fill="none"/><path d="M1 49v-4l13-6.500 6 3.500 5 7zM49 49v-5l-14-6-5 4-3 7z" fill="#f7f8f6"/><path d="M15 33l-.5 6.500L23 49h4.500L35 38.500 34.500 33z" fill="#dba58b"/><path d="M12.500 24c-1.600-.4-2 4.500-.2 6.500zM38.500 24c1.600-.4 2 4.500.2 6.500z" fill="#e2ae94" stroke="#e2ae94" stroke-width="1.500"/><path d="M13.500 22c0 9 1.500 13.500 4.500 16.500s5 4.500 7.500 4.500 4.500-1.500 7.500-4.500 4.500-7.500 4.500-16.500c0-7-5-11-12-11s-12 4-12 11z" fill="#efc4aa"/><path d="M13.300 21.500C11.500 12 15 7.500 19 6c2-2 5-3.600 7.500-3.400 1 .8 3 1.200 5 2.900 4 2.500 6.500 7 5.400 16-1-4-2.400-6.500-4.400-8-4 1-10 1-14-.2-2.600 1.500-4.200 4.200-5.200 8.200z" fill="#4a4339"/><path d="M15.300 20.300h9.200v6.200h-9.200zM26.700 20.300h9.200v6.200h-9.200zM24.500 22.300h2.200M13 21.500l2.300.3M38 21.500l-2.100.3" fill="none" stroke="#8b5e45" stroke-width="1.200" stroke-linejoin="round"/><path d="M18.500 23h3M29.500 23h3" stroke="#6b7a6a" stroke-width="1.400"/><path d="M24 29.500c.8 1 2.400 1 3.200 0" stroke="#c98d76" stroke-width="1" fill="none"/><path d="M19.800 32.300c3 2.800 8.400 2.800 11.400 0-2 1-9.400 1-11.400 0z" fill="#fff" stroke="#b8705c" stroke-width="1"/></svg>
<span class="t" style="left:1173.3px;top:404px;font-size:11.73px;color:#333;letter-spacing:-0.277px;"><span style="color:#222">Sales &amp; Marketing</span></span>
<span class="t" style="left:1173.3px;top:419px;font-size:11.73px;color:#333;letter-spacing:-0.483px;"><span style="color:#222">Fürst-Franz-Josef Strasse 5</span></span>
<span class="t" style="left:1173.3px;top:432.2px;font-size:11.73px;color:#333;letter-spacing:-0.337px;"><span style="color:#222">9490 Vaduz - LI</span><span style="color:#8a8a8a"> Geschäftlich</span></span>
<span class="t" style="left:1173.3px;top:451px;font-size:11.73px;color:#333;letter-spacing:-0.316px;"><span style="color:#1f5f8b">+4232382249</span><span style="color:#8a8a8a"> Geschäftlich</span></span>
<span class="t" style="left:1173.3px;top:465.8px;font-size:11.73px;color:#333;letter-spacing:-0.286px;"><span style="color:#1f5f8b">00249</span><span style="color:#8a8a8a"> Geschäftlich</span></span>
<span class="t" style="left:1173.3px;top:483px;font-size:11.73px;color:#333;letter-spacing:-0.315px;"><span style="color:#1f5f8b">kevin.marxer@kyberna.com</span><span style="color:#8a8a8a"> Ges...</span></span>
<div class="b " style="left:1103px;top:502px;width:255px;height:1px;background:#dcdcdc;"></div>
<svg class="b" style="left:1270px;top:511px;" width="11" height="11" viewBox="0 0 16 16"><g transform="rotate(-45 8 8)"><path fill="#c0484e" d="M-1.500 3.300h19v2.800a1.900 1.900 0 0 0 0 3.800v2.800h-19V9.900a1.900 1.900 0 0 0 0-3.800z"/><path stroke="#f3c9c9" stroke-width=".9" fill="none" d="M2 5.300h12v5.400H2z"/></g></svg>
<span class="t" style="left:1285px;top:510.7px;font-size:12.3px;color:#333;">1</span>
<svg class="b" style="left:1298.6px;top:510.6px;" width="11.8" height="11.8" viewBox="0 0 16 16"><path fill="none" stroke="#46b450" stroke-width="2.900" d="M13.400 6.400A5.700 5.700 0 0 0 3.200 5.200M2.600 9.600A5.700 5.700 0 0 0 12.800 10.800"/><path fill="#46b450" d="M15.600 1.200v6H9.600zM.4 14.800v-6h6z"/></svg>
<span class="t" style="left:1313.9px;top:510.7px;font-size:12.3px;color:#333;">1</span>
<svg class="b" style="left:1327.5px;top:510.6px;" width="11.2" height="11.2" viewBox="0 0 16 16"><circle cx="8" cy="8" r="7.400" fill="#bd4449"/><path fill="#fff" d="M6.700 3h2.600l-.3 6H7zM6.800 10.400h2.400v2.200H6.800z"/></svg>
<span class="t" style="left:1341.5px;top:510.7px;font-size:12.3px;color:#333;">3</span>
<div class="b " style="left:1049px;top:587.7px;width:368px;height:79.29999999999995px;background:#fff;border-radius:0 0 5px 5px;"></div>
<div class="b " style="left:1049px;top:554.8px;width:368px;height:32.90000000000009px;background:#dedede;border-bottom:1px solid #c9c9c9;"></div>
<span class="t" style="left:1058.7px;top:563px;font-size:15.0px;color:#333;letter-spacing:-1.353px;">SLA</span>
<svg class="b" style="left:1392px;top:565px;" width="14.5" height="14" viewBox="0 0 16 16"><rect x=".2" y="1.500" width="15.600" height="13" rx="1.200" fill="#c2c2c2"/><path fill="#dedede" d="M1.400 3.900h13.200v9.400H1.400z"/><path fill="#c2c2c2" d="M2.600 5.100h1.400v1.300H2.600zm2.500 0h8.300v1.300H5.100zM2.600 7.700h1.400V9H2.600zm2.500 0h8.300V9H5.100zM2.600 10.300h1.400v1.300H2.600zm2.500 0h8.300v1.300H5.100z"/></svg>
<span class="t" style="left:1056.8px;top:598.4px;font-size:12.36px;color:#222;letter-spacing:0.007px;">Reaktionszeit</span>
<span class="t" style="left:1056.8px;top:614.3px;font-size:12.36px;color:#1f5f8b;">_Arbeitsplatz/Drucker VIP</span>
<span class="t" style="left:1056.8px;top:630.3px;font-size:12.36px;color:#222;letter-spacing:0.043px;">Zielzeit</span>
<span class="t" style="left:1056.8px;top:646px;font-size:12.36px;color:#1f5f8b;">_Arbeitsplatz/Drucker VIP</span>
<span class="t" style="left:1362.81px;top:598.4px;font-size:12.36px;color:#57b35f;letter-spacing:-0.087px;">00:20</span>
<svg class="b" style="left:1397.3px;top:598px;" width="11" height="11" viewBox="0 0 16 16"><path fill="none" stroke="#3fae49" stroke-width="3.200" d="M1.600 8.400l4.400 4.400 8.400-8.800"/></svg>
<span class="t" style="left:1313.6px;top:614.3px;font-size:12.36px;color:#57b35f;letter-spacing:-0.102px;">23.01.2020 10:59</span>
<span class="t" style="left:1360.59px;top:630.3px;font-size:12.36px;color:#b4484c;letter-spacing:-0.208px;">-45:15</span>
<svg class="b" style="left:1398px;top:630.5px;" width="10.6" height="10.6" viewBox="0 0 16 16"><circle cx="8" cy="8" r="6.200" fill="none" stroke="#b4484c" stroke-width="2"/><path fill="none" stroke="#b4484c" stroke-width="1.600" d="M8.200 4.200v4.300H5"/></svg>
<span class="t" style="left:1309.54px;top:646px;font-size:12.36px;color:#1b4f78;letter-spacing:-0.056px;">23.01.2020  16:59</span>
<div class="b " style="left:1049px;top:715px;width:368px;height:66px;background:#fff;border-radius:0 0 5px 5px;"></div>
<div class="b " style="left:1049px;top:682.9px;width:368px;height:32.10000000000002px;background:#dedede;border-bottom:1px solid #c9c9c9;"></div>
<span class="t" style="left:1058.7px;top:690.8px;font-size:15.0px;color:#333;letter-spacing:-0.086px;">Betroffene Services</span>
<svg class="b" style="left:1059.2px;top:732.6px;" width="13.2" height="13.2" viewBox="0 0 16 16"><path fill="#111" d="M15.400 3.800c.3 1.600-.2 3.200-1.300 4.300s-2.900 1.700-4.500 1.200L3.300 15.600c-.7.700-1.900.7-2.600 0s-.7-1.900 0-2.600L7 6.700C6.500 5.100 7 3.400 8.100 2.200 9.300 1.100 10.900.6 12.500.900L9.900 3.500l.5 2.400 2.400.5zM2.700 14.200a.8.800 0 1 0-1.100-1.100.8.800 0 0 0 1.100 1.100z"/></svg>
<svg class="b" style="left:1078.8px;top:734.8px;" width="10.2" height="10.2" viewBox="0 0 16 16"><path fill="none" stroke="#c8c8c8" stroke-width="4.600" d="M2 2l12 12M14 2L2 14"/></svg>
<svg class="b" style="left:1094.8px;top:730.6px;" width="12.5" height="12.5" viewBox="0 0 16 16"><circle cx="8" cy="8" r="7.600" fill="#3fae49"/><path fill="none" stroke="#fff" stroke-width="2.400" d="M3.800 8.300l3 3 5.400-5.600"/></svg>
<span class="t" style="left:1110.4px;top:729.2px;font-size:15.0px;color:#1f5f8b;letter-spacing:-0.224px;">Drucker und Kopierer</span>
<svg class="b" style="left:1094.8px;top:754.2px;" width="13.2" height="13.8" viewBox="0 0 16 16"><g fill="#111"><ellipse cx="8" cy="3" rx="7" ry="2.700"/><path d="M1 5.100c1.200 1.200 4 1.800 7 1.800s5.800-.6 7-1.800v2.200c0 1.500-3.100 2.700-7 2.700S1 8.800 1 7.300z"/><path d="M1 9.100c1.200 1.200 4 1.800 7 1.800s5.800-.6 7-1.800v2.200c0 1.500-3.100 2.700-7 2.700s-7-1.200-7-2.700z" /><path d="M1 13c1.200 1.100 4 1.700 7 1.700s5.800-.6 7-1.700v.5c0 1.500-3.100 2.500-7 2.500s-7-1-7-2.500z"/></g></svg>
<svg class="b" style="left:1113.2px;top:756.8px;" width="10.3" height="10.3" viewBox="0 0 16 16"><path fill="none" stroke="#c8c8c8" stroke-width="4.600" d="M2 2l12 12M14 2L2 14"/></svg>
<span class="t" style="left:1127px;top:750.8px;font-size:15.0px;color:#1f5f8b;letter-spacing:-0.631px;">Xerox WorkCentre 7830 V4 PCL6, Xero...</span>
<svg class="b" style="left:1386px;top:752.9px;" width="11.2" height="11.2" viewBox="0 0 16 16"><path fill="#3fae49" d="M6 0h4v6h6v4h-6v6H6v-6H0V6h6z"/></svg>
<span class="t" style="left:1400.8px;top:750.8px;font-size:15.0px;color:#333;">2</span>
<div class="b " style="left:1049px;top:828.8px;width:368px;height:143.9000000000001px;background:#fff;border-radius:0 0 5px 5px;"></div>
<div class="b " style="left:1049px;top:797.3px;width:368px;height:31.5px;background:#dedede;border-bottom:1px solid #c9c9c9;"></div>
<span class="t" style="left:1058.7px;top:804.9px;font-size:15.0px;color:#333;letter-spacing:-0.255px;">Rollen</span>
<span class="t" style="left:1235px;top:808px;font-size:12.36px;color:#222;letter-spacing:-0.249px;">Erfasst als: 1st Level Support</span>
<svg class="b" style="left:1392px;top:807px;" width="14.5" height="14" viewBox="0 0 16 16"><rect x=".2" y="1.500" width="15.600" height="13" rx="1.200" fill="#c2c2c2"/><path fill="#dedede" d="M1.400 3.900h13.200v9.400H1.400z"/><path fill="#c2c2c2" d="M2.600 5.100h1.400v1.300H2.600zm2.500 0h8.300v1.300H5.100zM2.600 7.700h1.400V9H2.600zm2.500 0h8.300V9H5.100zM2.600 10.300h1.400v1.300H2.600zm2.500 0h8.300v1.300H5.100z"/></svg>
<span class="t" style="left:1056.8px;top:839.7px;font-size:12.36px;color:#c0c0c0;">1st Level Support</span>
<svg class="b" style="left:1157.7px;top:842.1px;" width="8.4" height="8.4" viewBox="0 0 16 16"><path fill="none" stroke="#c8c8c8" stroke-width="4.600" d="M2 2l12 12M14 2L2 14"/></svg>
<span class="t" style="left:1056.8px;top:855.8px;font-size:12.36px;color:#1f5f8b;letter-spacing:-0.248px;">Service Desk H</span>
<svg class="b" style="left:1142.8px;top:859.0999999999999px;" width="7.4" height="7.4" viewBox="0 0 16 16"><path fill="#c4c4c4" d="M0 4h16L8 12.500z"/></svg>
<svg class="b" style="left:1246.0px;top:855.1999999999999px;" width="12.6" height="12.6" viewBox="0 0 16 16"><circle cx="8" cy="8" r="7.600" fill="#c8902e"/><circle cx="8" cy="8" r="6" fill="#f8ecd4"/><circle cx="8" cy="6.300" r="2.700" fill="#c8902e"/><path fill="#c8902e" d="M3.300 11.800C4 9.900 5.800 9.400 8 9.400s4 .5 4.700 2.400C11.600 13.200 9.900 14 8 14s-3.600-.8-4.700-2.200z"/></svg>
<span class="t" style="left:1262.2px;top:855.8px;font-size:12.36px;color:#1f5f8b;letter-spacing:-0.059px;">Köhlmeier Sebastian (...</span>
<svg class="b" style="left:1401px;top:859.0999999999999px;" width="7.8" height="7.8" viewBox="0 0 16 16"><path fill="#c4c4c4" d="M0 4h16L8 12.500z"/></svg>
<span class="t" style="left:1056.8px;top:871.6px;font-size:12.36px;color:#c0c0c0;letter-spacing:0.04px;">2nd Level Support</span>
<svg class="b" style="left:1162.5px;top:874.0px;" width="8.4" height="8.4" viewBox="0 0 16 16"><path fill="none" stroke="#c8c8c8" stroke-width="4.600" d="M2 2l12 12M14 2L2 14"/></svg>
<span class="t" style="left:1056.8px;top:887.7px;font-size:12.36px;color:#1f5f8b;letter-spacing:0.115px;">Hardware</span>
<svg class="b" style="left:1115.6px;top:891.0px;" width="7.4" height="7.4" viewBox="0 0 16 16"><path fill="#c4c4c4" d="M0 4h16L8 12.500z"/></svg>
<svg class="b" style="left:1252.8px;top:887.1px;" width="12.6" height="12.6" viewBox="0 0 16 16"><circle cx="8" cy="8" r="7.600" fill="#c8902e"/><circle cx="8" cy="8" r="6" fill="#f8ecd4"/><circle cx="8" cy="6.300" r="2.700" fill="#c8902e"/><path fill="#c8902e" d="M3.300 11.800C4 9.900 5.800 9.400 8 9.400s4 .5 4.700 2.400C11.600 13.200 9.900 14 8 14s-3.600-.8-4.700-2.200z"/></svg>
<span class="t" style="left:1269px;top:887.7px;font-size:12.36px;color:#1f5f8b;letter-spacing:0.049px;">Link Daniel (daniel.link)</span>
<svg class="b" style="left:1401px;top:891.0px;" width="7.8" height="7.8" viewBox="0 0 16 16"><path fill="#c4c4c4" d="M0 4h16L8 12.500z"/></svg>
<span class="t" style="left:1056.8px;top:903.8px;font-size:12.36px;color:#c0c0c0;letter-spacing:0.054px;">3rd Level Support</span>
<span class="t" style="left:1056.8px;top:919.7px;font-size:12.36px;color:#1f5f8b;letter-spacing:0.082px;">Externer Partner</span>
<svg class="b" style="left:1153.1px;top:923.0px;" width="7.4" height="7.4" viewBox="0 0 16 16"><path fill="#c4c4c4" d="M0 4h16L8 12.500z"/></svg>
<span class="t" style="left:1313px;top:919.7px;font-size:12.36px;color:#8c8c8c;letter-spacing:0.105px;">Ohne Benutzer</span>
<svg class="b" style="left:1401px;top:923.0px;" width="7.8" height="7.8" viewBox="0 0 16 16"><path fill="#c4c4c4" d="M0 4h16L8 12.500z"/></svg>
<span class="t" style="left:1056.8px;top:935.8px;font-size:12.36px;color:#c0c0c0;letter-spacing:-0.05px;">Kunde</span>
<span class="t" style="left:1056.8px;top:951px;font-size:12.36px;color:#1f5f8b;letter-spacing:0.099px;">Ohne Gruppe</span>
<svg class="b" style="left:1137.1px;top:954.3px;" width="7.4" height="7.4" viewBox="0 0 16 16"><path fill="#c4c4c4" d="M0 4h16L8 12.500z"/></svg>
<svg class="b" style="left:1246.0px;top:950.4px;" width="12.6" height="12.6" viewBox="0 0 16 16"><circle cx="8" cy="8" r="7.600" fill="#c8902e"/><circle cx="8" cy="8" r="6" fill="#f8ecd4"/><circle cx="8" cy="6.300" r="2.700" fill="#c8902e"/><path fill="#c8902e" d="M3.300 11.800C4 9.900 5.800 9.400 8 9.400s4 .5 4.700 2.400C11.600 13.200 9.900 14 8 14s-3.600-.8-4.700-2.200z"/></svg>
<span class="t" style="left:1262.2px;top:951px;font-size:12.36px;color:#1f5f8b;letter-spacing:-0.044px;">Marxer Kevin (kevin.m...</span>
<svg class="b" style="left:1401px;top:954.3px;" width="7.8" height="7.8" viewBox="0 0 16 16"><path fill="#c4c4c4" d="M0 4h16L8 12.500z"/></svg>
</body></html>
